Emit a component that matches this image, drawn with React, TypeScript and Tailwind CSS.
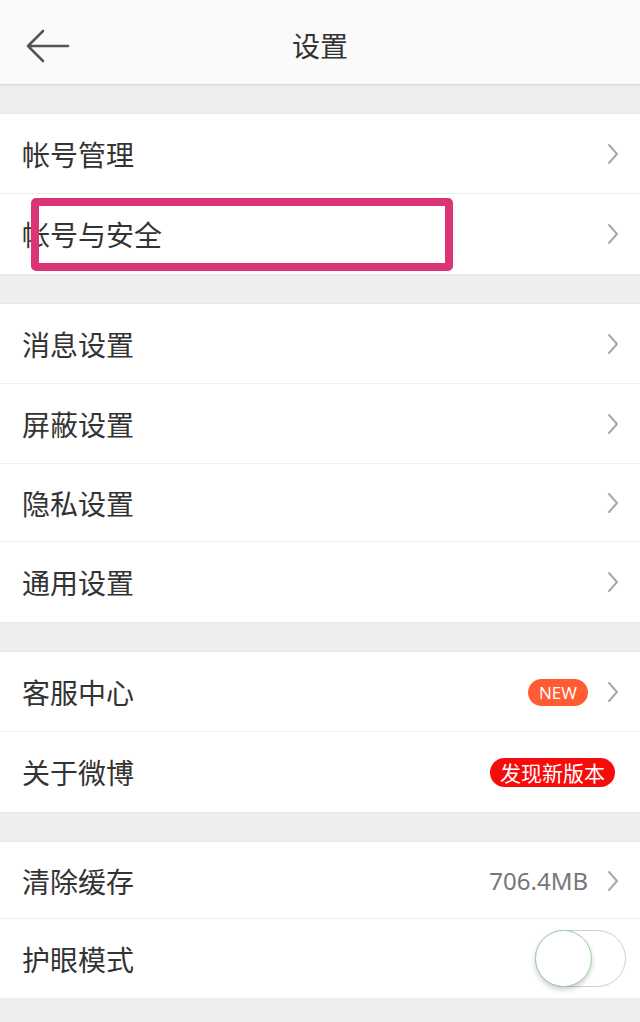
import React from 'react';

const Chevron: React.FC = () => (
  <svg width="14" height="24" viewBox="0 0 14 24" className="shrink-0">
    <path d="M3 3 L11 12 L3 21" fill="none" stroke="#a8a8a8" strokeWidth="2" strokeLinecap="round" strokeLinejoin="round" />
  </svg>
);

interface RowProps {
  label: string;
  h?: string;
  last?: boolean;
  right?: React.ReactNode;
  arrow?: boolean;
}

const Row: React.FC<RowProps> = ({ label, h = 'h-[80px]', last, right, arrow = true }) => (
  <div className={`relative flex items-center bg-white pl-[22px] pr-[20px] ${h}`}>
    <span className="flex-1 text-[28px] text-[#333]">{label}</span>
    {right}
    {arrow && <div className="ml-[18px]"><Chevron /></div>}
    {!last && <div className="absolute bottom-0 left-0 right-0 h-px bg-[#efefef]" />}
  </div>
);

const Gap: React.FC<{ h?: string }> = ({ h = 'h-[30px]' }) => (
  <div className={`bg-[#eeeeee] border-y border-[#e6e6e6] ${h}`} />
);

export default function App() {
  return (
    <div
      className="w-[640px] h-[1022px] overflow-hidden bg-[#eeeeee]"
      style={{ fontFamily: '"Noto Sans CJK SC", "Noto Sans", sans-serif' }}
    >
      <div className="relative h-[85px] bg-[#fafafa] border-b border-[#dcdcdc] flex items-center justify-center">
        <svg width="46" height="36" viewBox="0 0 46 36" className="absolute left-[25px] top-[28px]">
          <path d="M43 18 H3 M18 3 L3 18 L18 33" fill="none" stroke="#555" strokeWidth="2.6" strokeLinecap="round" strokeLinejoin="round" />
        </svg>
        <span className="text-[28px] text-[#333] mt-[5px]">设置</span>
      </div>

      <Gap h="h-[29px]" />
      <Row label="帐号管理" />
      <div className="relative">
        <Row label="帐号与安全" last />
        <div className="absolute left-[31px] top-[4px] w-[422px] h-[73px] border-[8px] border-[#dc3577] rounded-[5px]" />
      </div>

      <Gap />
      <Row label="消息设置" />
      <Row label="屏蔽设置" />
      <Row label="隐私设置" h="h-[78px]" />
      <Row label="通用设置" last />

      <Gap />
      <Row
        label="客服中心"
        right={
          <span
            className="bg-[#ff5c35] text-white text-[17px] font-normal leading-none rounded-full px-[11px] py-[5px]"
            style={{ fontFamily: '"Open Sans", "Noto Sans", sans-serif' }}
          >
            NEW
          </span>
        }
      />
      <Row
        label="关于微博"
        last
        arrow={false}
        right={
          <span className="bg-[#f80b0b] text-white text-[21px] leading-none rounded-full px-[10px] py-[4px] mr-[5px]">发现新版本</span>
        }
      />

      <Gap />
      <Row
        label="清除缓存"
        h="h-[77px]"
        right={<span className="text-[24px] text-[#777]" style={{ fontFamily: '"Noto Sans", sans-serif' }}>706.4MB</span>}
      />
      <Row
        label="护眼模式"
        h="h-[79px]"
        last
        arrow={false}
        right={
          <div className="relative w-[91px] h-[57px] rounded-full border border-[#cfcfcf] bg-white -mr-[6px]">
            <div className="absolute -left-px -top-px w-[57px] h-[57px] rounded-full bg-white border border-[#9fcf9f] shadow-[0_3px_5px_rgba(0,0,0,0.18)]" />
          </div>
        }
      />
    </div>
  );
}
